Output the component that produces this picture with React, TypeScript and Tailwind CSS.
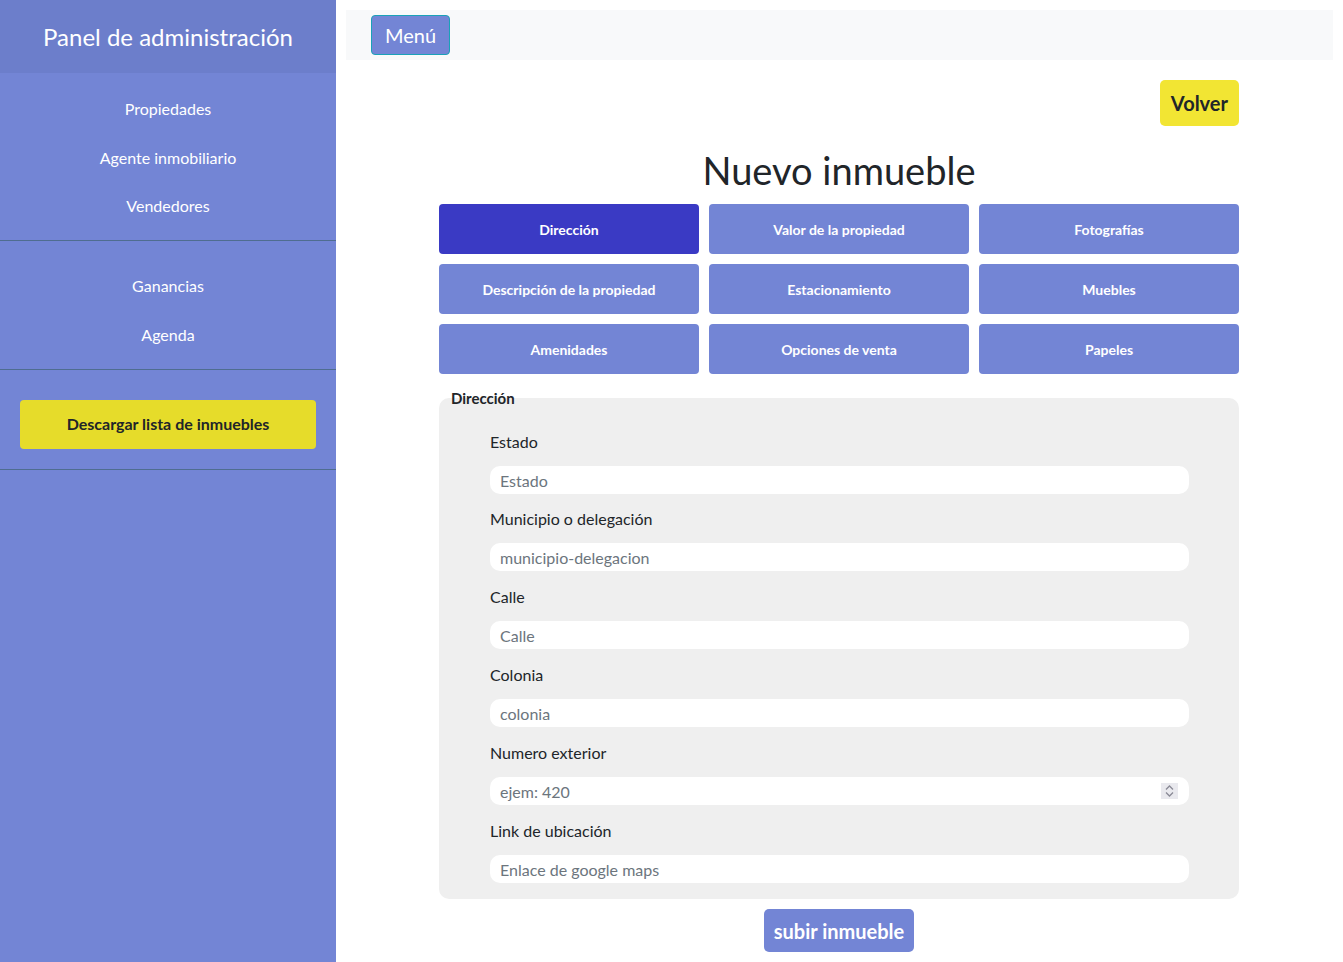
import React from "react";

const navTop = ["Propiedades", "Agente inmobiliario", "Vendedores"];
const navMid = ["Ganancias", "Agenda"];
const tabs = [
  "Dirección",
  "Valor de la propiedad",
  "Fotografías",
  "Descripción de la propiedad",
  "Estacionamiento",
  "Muebles",
  "Amenidades",
  "Opciones de venta",
  "Papeles",
];
const fields: { label: string; ph: string; type?: string }[] = [
  { label: "Estado", ph: "Estado" },
  { label: "Municipio o delegación", ph: "municipio-delegacion" },
  { label: "Calle", ph: "Calle" },
  { label: "Colonia", ph: "colonia" },
  { label: "Numero exterior", ph: "ejem: 420", type: "number" },
  { label: "Link de ubicación", ph: "Enlace de google maps" },
];

export default function App() {
  return (
    <div
      className="flex min-h-[962px] w-full bg-white text-[#212529]"
      style={{ fontFamily: "Lato, 'Open Sans', sans-serif" }}
    >
      <aside className="w-[336px] shrink-0 bg-[#7385d5] text-white">
        <div className="flex h-[73px] items-center justify-center bg-[#6c7ecb] text-[24px]">
          Panel de administración
        </div>
        <div className="pt-3 pb-[9px]">
          {navTop.map((n) => (
            <div key={n} className="flex h-[48.5px] items-center justify-center text-[16px]">
              {n}
            </div>
          ))}
        </div>
        <div className="h-px bg-[#4f6d90]" />
        <div className="pt-[21px] pb-[9px]">
          {navMid.map((n) => (
            <div key={n} className="flex h-[49px] items-center justify-center text-[16px]">
              {n}
            </div>
          ))}
        </div>
        <div className="h-px bg-[#4f6d90]" />
        <div className="px-5 pt-[30px] pb-5">
          <button className="flex h-[49px] w-full items-center justify-center rounded-[4px] bg-[#e6dc2a] text-[16px] font-bold text-[#212529]">
            Descargar lista de inmuebles
          </button>
        </div>
        <div className="h-px bg-[#4f6d90]" />
      </aside>

      <main className="flex-1 px-[10px] pt-[10px]">
        <div className="flex h-[50px] items-center bg-[#f8f9fa] px-[25px]">
          <button className="flex h-10 items-center rounded-[4px] border border-[#1aa1b8] bg-[#7385d5] px-[13px] text-[20px] text-white">
            Menú
          </button>
        </div>

        <div className="ml-[93px] w-[800px]">
          <div className="mt-5 flex justify-end">
            <button className="flex h-[46px] items-center rounded-[5px] bg-[#f2e533] px-[11px] text-[20px] font-bold text-[#212529]">
              Volver
            </button>
          </div>
          <h1 className="mt-5 mb-[10px] text-center text-[38px] leading-[48px]">Nuevo inmueble</h1>

          <div className="grid grid-cols-3 gap-[10px]">
            {tabs.map((t, i) => (
              <button
                key={t}
                className={`flex h-[50px] items-center justify-center rounded-[4px] text-[14px] font-bold text-white ${
                  i === 0 ? "bg-[#3a3ac4]" : "bg-[#7385d5]"
                }`}
              >
                {t}
              </button>
            ))}
          </div>

          <fieldset className="mt-3 rounded-[10px] bg-[#efefef] px-3 pb-4">
            <legend className="text-[15px] font-bold leading-6">Dirección</legend>
            <div className="pt-5 pl-[39px] pr-[38px]">
              {fields.map((f, i) => (
                <div key={f.label} className={i === 0 ? "mb-[13px]" : i === fields.length - 1 ? "" : "mb-[14px]"}>
                  <div className="mb-3 text-[16px] leading-6">{f.label}</div>
                  <div className="relative">
                    <input
                      type="text"
                      placeholder={f.ph}
                      className="block h-7 w-full rounded-[10px] bg-white px-[10px] text-[16px] text-[#212529] outline-none placeholder:text-[#6c757d]"
                    />
                    {f.type === "number" && (
                      <div className="absolute top-[6px] right-[11px] flex h-[16px] w-[17px] flex-col items-center justify-center bg-[#e9e9ee]">
                        <svg width="9" height="14" viewBox="0 0 9 14" fill="none" stroke="#8a8a96" strokeWidth="1.3">
                          <path d="M1 5.5 L4.5 2 L8 5.5" />
                          <path d="M1 8.5 L4.5 12 L8 8.5" />
                        </svg>
                      </div>
                    )}
                  </div>
                </div>
              ))}
            </div>
          </fieldset>

          <div className="mt-[10px] flex justify-center">
            <button className="flex h-[43px] items-center rounded-[5px] bg-[#7385d5] px-[10px] text-[20px] font-bold text-white">
              subir inmueble
            </button>
          </div>
        </div>
      </main>
    </div>
  );
}
